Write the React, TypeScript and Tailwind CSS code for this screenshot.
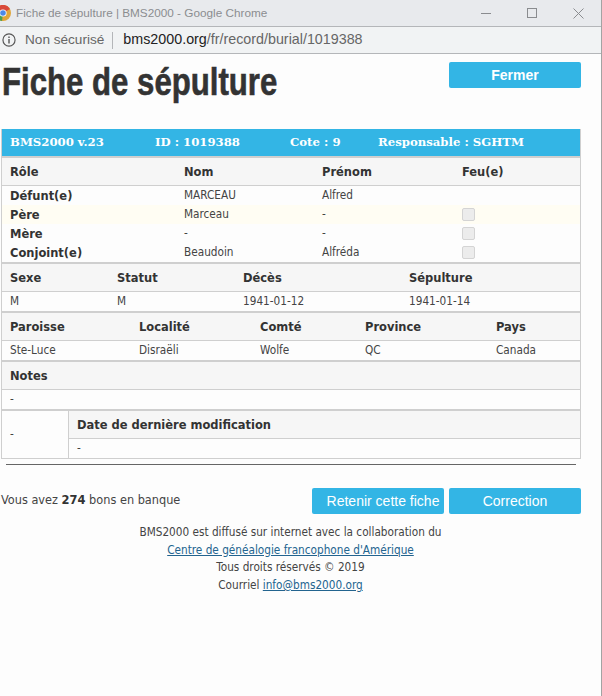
import type { ReactNode } from 'react'

const bodyFont = { fontFamily: '"DejaVu Sans Condensed", "DejaVu Sans", Tahoma, sans-serif' }

function HeaderRow({ cols, children }: { cols: string; children: ReactNode }) {
  return (
    <div className={`grid h-[28px] items-center border-b border-[#cfcfcf] bg-[#f6f6f6] pl-[8px] text-[12.75px] font-bold text-[#333] ${cols}`}>
      {children}
    </div>
  )
}

function ValueRow({ cols, children, bg }: { cols: string; children: ReactNode; bg?: string }) {
  return (
    <div className={`grid h-[19px] items-center pl-[8px] text-[11.7px] text-[#444] ${cols} ${bg ?? ''}`}>{children}</div>
  )
}

function Divider() {
  return <div className="h-[2px] bg-[#cfcfcf]" />
}

function Check() {
  return <span className="block h-[13px] w-[13px] rounded-[2px] border border-[#d4d4d4] bg-[#ececec]" />
}

function BlueButton({ children, className }: { children: ReactNode; className: string }) {
  return (
    <button
      type="button"
      className={`flex h-[26px] items-center justify-center rounded-[2px] bg-[#33b5e5] text-white ${className}`}
      style={{ fontFamily: '"Liberation Sans", Arial, sans-serif' }}
    >
      {children}
    </button>
  )
}

export default function App() {
  const peopleCols = 'grid-cols-[174px_138px_140px_1fr]'
  const eventCols = 'grid-cols-[107px_126px_166px_1fr]'
  const placeCols = 'grid-cols-[129px_121px_105px_131px_1fr]'

  return (
    <div className="h-[696px] w-[602px] overflow-hidden border-r border-[#a3a3a3] bg-[#fdfdfd]" style={bodyFont}>
      {/* window title bar */}
      <div className="flex h-[27px] items-center border-b border-[#b4b6b9] bg-[#e8eaed] pr-[17px]">
        <svg viewBox="0 0 16 16" className="ml-[-5px] h-[16px] w-[16px] shrink-0">
          <circle cx="8" cy="8" r="8" fill="#e0a63a" />
          <path d="M8 8 L1 4 A8 8 0 0 1 15 4 Z" fill="#d9493a" />
          <path d="M8 8 L1 4 A8 8 0 0 0 7 16 Z" fill="#4a9f52" />
          <circle cx="8" cy="8" r="3.6" fill="#fff" />
          <circle cx="8" cy="8" r="2.8" fill="#4c89e8" />
        </svg>
        <span className="ml-[5px] text-[11.75px] text-[#8b8d90]" style={{ fontFamily: '"Liberation Sans", sans-serif' }}>
          Fiche de sépulture | BMS2000 - Google Chrome
        </span>
        <div className="ml-auto flex items-center gap-[36px] text-[#8a8c8f]">
          <span className="h-px w-[10px] bg-[#8a8c8f]" />
          <span className="h-[10px] w-[10px] border border-[#8a8c8f]" />
          <svg viewBox="0 0 11 11" className="h-[11px] w-[11px]">
            <path d="M0.5 0.5 L10.5 10.5 M10.5 0.5 L0.5 10.5" stroke="currentColor" fill="none" />
          </svg>
        </div>
      </div>

      {/* address bar */}
      <div className="flex h-[27px] items-center border-b border-[#b4b6b9] bg-[#f1f3f4] pl-[2px]" style={{ fontFamily: '"Liberation Sans", sans-serif' }}>
        <svg viewBox="0 0 12 12" className="h-[14px] w-[14px] text-[#555]">
          <circle cx="6" cy="6" r="5.2" stroke="currentColor" strokeWidth="1" fill="none" />
          <path d="M6 5.2 V9 M6 3 V4.2" stroke="currentColor" strokeWidth="1.2" />
        </svg>
        <span className="ml-[9px] text-[13.6px] text-[#666]">Non sécurisé</span>
        <span className="ml-[8px] h-[17px] w-px bg-[#b4b6b9]" />
        <span className="ml-[10px] text-[14.3px] text-[#222]">
          bms2000.org<span className="text-[#666]">/fr/record/burial/1019388</span>
        </span>
      </div>

      {/* page heading */}
      <div className="flex h-[75px] items-start justify-between pr-[20px] pt-[8px]">
        <h1
          className="ml-[2px] origin-left scale-x-[0.82] text-[38px] leading-[40px] font-bold whitespace-nowrap text-[#333] [-webkit-text-stroke:0.6px_#333]"
          style={{ fontFamily: '"Liberation Sans", sans-serif' }}
        >
          Fiche de sépulture
        </h1>
        <BlueButton className="w-[132px] text-[14px] font-bold">Fermer</BlueButton>
      </div>

      {/* record table */}
      <div className="ml-px w-[580px] border-x border-b border-[#cfcfcf]">
        <div className="flex h-[27px] items-center bg-[#33b5e5] pl-[8px] text-[11.7px] font-bold text-white" style={{ fontFamily: '"DejaVu Serif", Georgia, serif' }}>
          <span className="w-[145px]">BMS2000 v.23</span>
          <span className="w-[135px]">ID : 1019388</span>
          <span className="w-[88px]">Cote : 9</span>
          <span>Responsable : SGHTM</span>
        </div>
        <Divider />

        <HeaderRow cols={peopleCols}>
          <span>Rôle</span>
          <span>Nom</span>
          <span>Prénom</span>
          <span>Feu(e)</span>
        </HeaderRow>
        <ValueRow cols={peopleCols}>
          <b className="text-[12.75px] text-[#333]">Défunt(e)</b>
          <span>MARCEAU</span>
          <span>Alfred</span>
          <span />
        </ValueRow>
        <ValueRow cols={peopleCols} bg="bg-[#fffdf3]">
          <b className="text-[12.75px] text-[#333]">Père</b>
          <span>Marceau</span>
          <span>-</span>
          <Check />
        </ValueRow>
        <ValueRow cols={peopleCols}>
          <b className="text-[12.75px] text-[#333]">Mère</b>
          <span>-</span>
          <span>-</span>
          <Check />
        </ValueRow>
        <ValueRow cols={peopleCols}>
          <b className="text-[12.75px] text-[#333]">Conjoint(e)</b>
          <span>Beaudoin</span>
          <span>Alfréda</span>
          <Check />
        </ValueRow>
        <Divider />

        <HeaderRow cols={eventCols}>
          <span>Sexe</span>
          <span>Statut</span>
          <span>Décès</span>
          <span>Sépulture</span>
        </HeaderRow>
        <ValueRow cols={eventCols}>
          <span>M</span>
          <span>M</span>
          <span>1941-01-12</span>
          <span>1941-01-14</span>
        </ValueRow>
        <Divider />

        <HeaderRow cols={placeCols}>
          <span>Paroisse</span>
          <span>Localité</span>
          <span>Comté</span>
          <span>Province</span>
          <span>Pays</span>
        </HeaderRow>
        <ValueRow cols={placeCols}>
          <span>Ste-Luce</span>
          <span>Disraëli</span>
          <span>Wolfe</span>
          <span>QC</span>
          <span>Canada</span>
        </ValueRow>
        <Divider />

        <HeaderRow cols="grid-cols-1">
          <span>Notes</span>
        </HeaderRow>
        <ValueRow cols="grid-cols-1">
          <span>-</span>
        </ValueRow>
        <Divider />

        <div className="flex">
          <div className="flex w-[67px] shrink-0 items-center border-r border-[#cfcfcf] pl-[8px] text-[11.7px] text-[#444]">-</div>
          <div className="flex-1">
            <HeaderRow cols="grid-cols-1">
              <span>Date de dernière modification</span>
            </HeaderRow>
            <ValueRow cols="grid-cols-1">
              <span>-</span>
            </ValueRow>
          </div>
        </div>
      </div>

      <div className="ml-[6px] mt-[5px] h-px w-[570px] bg-[#666]" />

      {/* bonus line and actions */}
      <div className="mt-[23px] flex items-start pr-[20px]">
        <p className="ml-px pt-[2px] text-[12.6px] text-[#444]">
          Vous avez <b className="text-[12.75px] text-[#333]">274</b> bons en banque
        </p>
        <div className="ml-auto flex gap-[5px]">
          <BlueButton className="w-[132px] pl-[10px] text-[14px]">Retenir cette fiche</BlueButton>
          <BlueButton className="w-[132px] text-[14px]">Correction</BlueButton>
        </div>
      </div>

      {/* footer */}
      <div className="mt-[10px] pr-[20px] text-center text-[11.7px] leading-[17.7px] text-[#444]">
        <p>BMS2000 est diffusé sur internet avec la collaboration du</p>
        <p>
          <a href="#" className="text-[#23648f] underline">Centre de généalogie francophone d'Amérique</a>
        </p>
        <p>Tous droits réservés © 2019</p>
        <p>
          Courriel <a href="#" className="text-[#23648f] underline">info@bms2000.org</a>
        </p>
      </div>
    </div>
  )
}
